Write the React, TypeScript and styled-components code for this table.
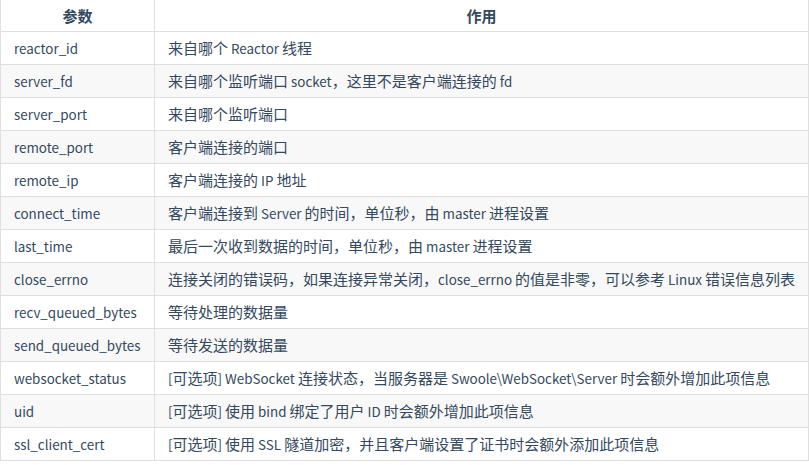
import styled, { createGlobalStyle } from 'styled-components'

const GlobalStyle = createGlobalStyle`
    html, body {
        margin: 0;
        padding: 0;
        background: #ffffff;
    }
`

const rows: [string, string][] = [
    ['reactor_id', '来自哪个 Reactor 线程'],
    ['server_fd', '来自哪个监听端口 socket，这里不是客户端连接的 fd'],
    ['server_port', '来自哪个监听端口'],
    ['remote_port', '客户端连接的端口'],
    ['remote_ip', '客户端连接的 IP 地址'],
    ['connect_time', '客户端连接到 Server 的时间，单位秒，由 master 进程设置'],
    ['last_time', '最后一次收到数据的时间，单位秒，由 master 进程设置'],
    ['close_errno', '连接关闭的错误码，如果连接异常关闭，close_errno 的值是非零，可以参考 Linux 错误信息列表'],
    ['recv_queued_bytes', '等待处理的数据量'],
    ['send_queued_bytes', '等待发送的数据量'],
    ['websocket_status', '[可选项] WebSocket 连接状态，当服务器是 Swoole\\WebSocket\\Server 时会额外增加此项信息'],
    ['uid', '[可选项] 使用 bind 绑定了用户 ID 时会额外增加此项信息'],
    ['ssl_client_cert', '[可选项] 使用 SSL 隧道加密，并且客户端设置了证书时会额外添加此项信息'],
]

const Table = styled.table`
    width: 809px;
    border-collapse: collapse;
    table-layout: fixed;
    font-family: "Noto Sans CJK SC", "Noto Sans", sans-serif;
    font-size: 15px;
    color: #34495e;
`

const HeadCell = styled.th<{ $w?: number }>`
    width: ${p => (p.$w ? `${p.$w}px` : 'auto')};
    height: 31px;
    padding: 0 13px;
    font-weight: 700;
    text-align: center;
    border: 1px solid #dfdfdf;
    border-top: none;
    box-sizing: border-box;
`

const Row = styled.tr<{ $striped: boolean }>`
    background: ${p => (p.$striped ? '#f8f8f8' : '#ffffff')};
`

const Cell = styled.td`
    height: 33px;
    padding: 0 13px;
    border: 1px solid #dfdfdf;
    white-space: nowrap;
    box-sizing: border-box;
`

// latin runs sit a bit narrower than the cjk text around them
const Latin = styled.span`
    font-size: 13.4px;
`

const Mixed = ({ text }: { text: string }) => {
    const parts = text.split(/([\u0000-\u024f]+)/).filter(Boolean)
    return (
        <>
            {parts.map((p, k) =>
                /^[\u0000-\u024f]+$/.test(p) ? <Latin key={k}>{p}</Latin> : <span key={k}>{p}</span>
            )}
        </>
    )
}

export default function App() {
    return (
        <>
            <GlobalStyle />
            <Table>
                <thead>
                    <tr>
                        <HeadCell $w={154}>参数</HeadCell>
                        <HeadCell>作用</HeadCell>
                    </tr>
                </thead>
                <tbody>
                    {rows.map(([name, desc], k) => (
                        <Row key={name} $striped={k % 2 === 1}>
                            <Cell><Latin>{name}</Latin></Cell>
                            <Cell><Mixed text={desc} /></Cell>
                        </Row>
                    ))}
                </tbody>
            </Table>
        </>
    )
}
